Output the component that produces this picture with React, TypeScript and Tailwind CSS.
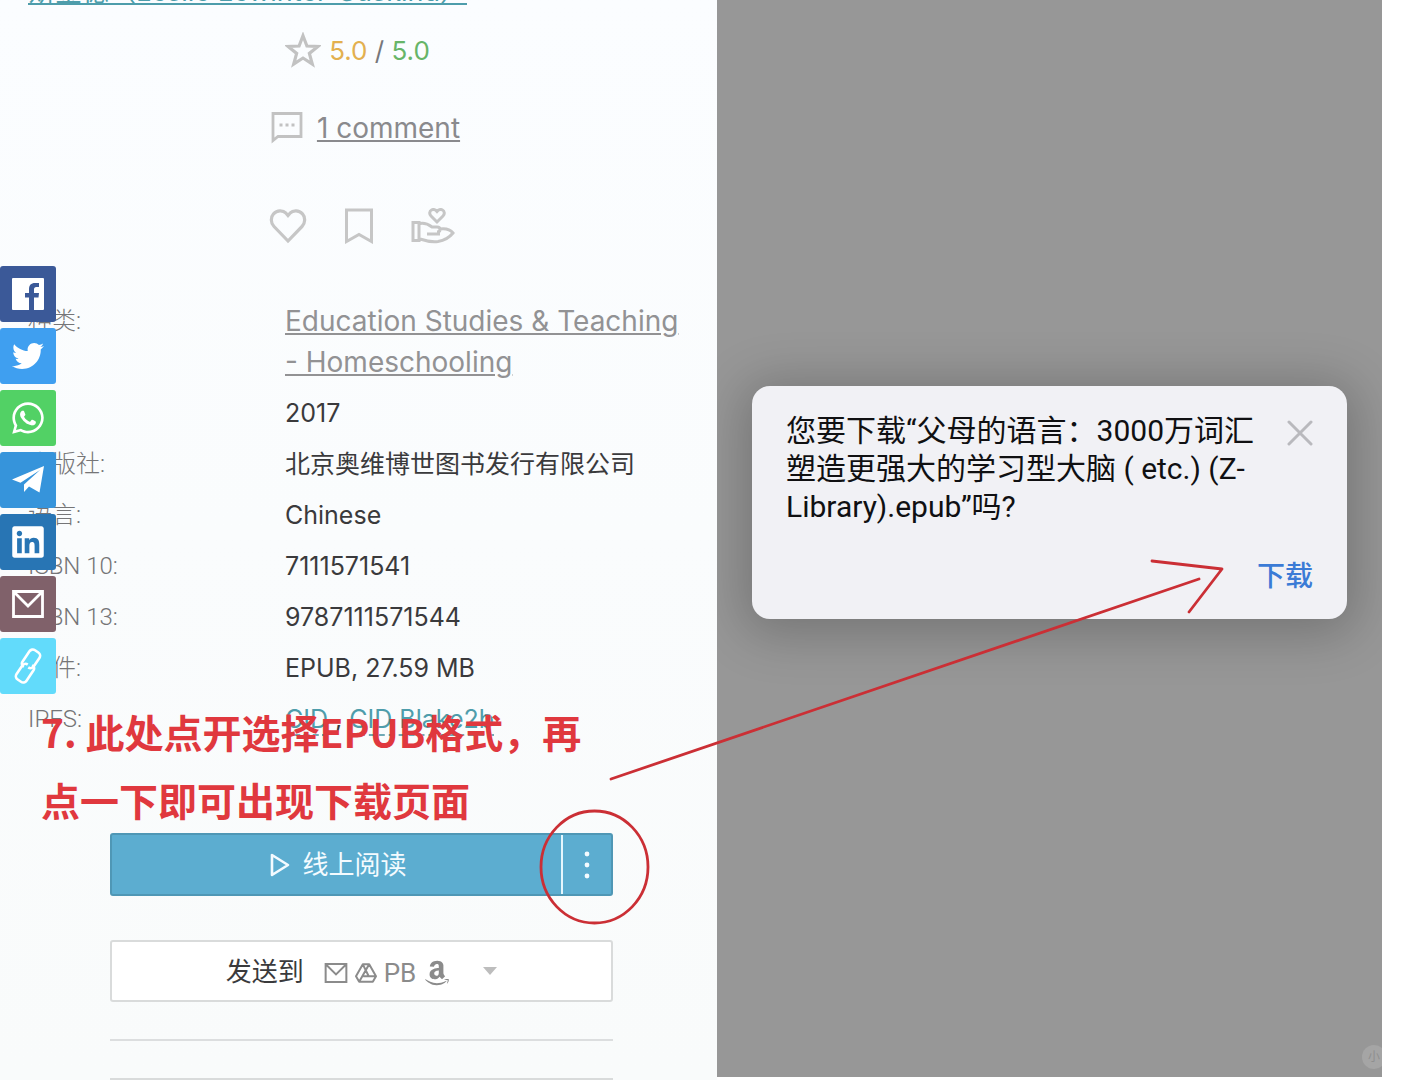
import type { ReactNode } from "react";
import { FaAmazon, FaLinkedin, FaTwitter, FaWhatsapp } from "react-icons/fa";

const FacebookIcon = () => (
  <svg viewBox="0 0 32 32" className="size-8">
    <path fill="#fff" d="M1 0h30a1 1 0 0 1 1 1v30a1 1 0 0 1-1 1h-9V19.500h4.500l.5-4.500h-5v-3.500c0-1.600.6-2.500 2.400-2.500H27V5h-4c-4 0-6 2.200-6 6v4h-4v4.500h4V32H1a1 1 0 0 1-1-1V1a1 1 0 0 1 1-1z" />
  </svg>
);

const TelegramIcon = () => (
  <svg viewBox="0 0 32 32" className="size-8">
    <path fill="#fff" d="M32 2 0 15.500l8.500 3.200L28 6 12 20.500V28l5-5.500 10.500 6z" />
  </svg>
);

const MailIcon = ({ className }: { className: string }) => (
  <svg viewBox="0 0 32 28" className={className} fill="none" stroke="currentColor" strokeWidth="2.800">
    <path d="M1.500 1.500h29v25h-29zM2 2l14 14L30 2" />
  </svg>
);

const LinkIcon = () => (
  <svg viewBox="0 0 32 36" className="h-9 w-8" fill="none" stroke="#fff" strokeWidth="2.600">
    <g transform="rotate(34 16 18)">
      <path d="M13 21h-.5a3.500 3.500 0 0 1-3.500-3.500V5a4 4 0 0 1 4-4h4a4 4 0 0 1 4 4v10a4 4 0 0 1-4 4" />
      <path d="M19 15h.5a3.500 3.500 0 0 1 3.500 3.500V31a4 4 0 0 1-4 4h-4a4 4 0 0 1-4-4V21a4 4 0 0 1 4-4" />
    </g>
  </svg>
);

const StarIcon = () => (
  <svg viewBox="1 1 34 34" className="size-9" fill="none" stroke="#c2c2c2" strokeWidth="3">
    <path d="m18 4.500 3.700 9.700 10.400.5-8.100 6.500 2.800 10.200L18 25.600l-8.800 5.800L12 21.200l-8.100-6.500 10.400-.5z" />
  </svg>
);

const CommentIcon = () => (
  <svg viewBox="0 0 32 32" className="size-8" fill="none" stroke="#c2c2c2" strokeWidth="2.800">
    <path d="M2 1.500h28v23H7l-5 4z" />
    <path strokeWidth="3" d="M8.500 13h3M14.500 13h3M20.500 13h3" />
  </svg>
);

const HeartIcon = () => (
  <svg viewBox="0 0 38 36" className="h-9 w-[38px]" fill="none" stroke="#c6c6c6" strokeWidth="3.200">
    <path d="M19 33 5 18.500C1.500 15 1.500 9 4.500 5.800 8 2 14 2 17 5.200l2 2.300 2-2.300c3-3.200 9-3.200 12.500.6 3 3.200 3 9.200-.5 12.700z" />
  </svg>
);

const BookmarkIcon = () => (
  <svg viewBox="0 0 28 36" className="h-9 w-7" fill="none" stroke="#c6c6c6" strokeWidth="3">
    <path d="M1.500 2h25v31.500L14 26.500 1.500 33.500z" />
  </svg>
);

const DonateIcon = () => (
  <svg viewBox="0 0 44 36" className="h-9 w-11" fill="none" stroke="#c6c6c6" strokeWidth="3">
    <path d="m26 14-6-6c-2-2-1.500-5 .5-6 2-1 4-.3 5.500 1.500C27.500 1.700 29.500 1 31.500 2c2 1 2.500 4 .5 6z" />
    <path d="M2 14.500h6v18H2zM9 15.500c5-1 8 .5 12 3.500h5c2 0 3 1 3 2.500s-1 2.500-3 2.500M16 26h13M28 21c6-1 11 0 14 4-4 5-9 7.500-15 8.500-6 .8-12-.5-18-2.500" />
  </svg>
);

const DriveIcon = () => (
  <svg viewBox="0 0 24 22" className="h-5 w-[22px]" fill="none" stroke="currentColor" strokeWidth="2.200">
    <path strokeLinejoin="round" d="M8.500 1.500h7L23 14.500l-3.500 6h-15L1 14.500zM8.500 1.500 15 14.500h8M15.500 1.500 12 7.500 4.500 20.500M9 14.500h6" />
  </svg>
);

const shares: { name: string; color: string; icon: ReactNode }[] = [
  { name: "Facebook", color: "bg-[#3b5998]", icon: <FacebookIcon /> },
  { name: "Twitter", color: "bg-[#3f9ff0]", icon: <FaTwitter className="size-8" /> },
  { name: "WhatsApp", color: "bg-[#52d165]", icon: <FaWhatsapp className="size-9" /> },
  { name: "Telegram", color: "bg-[#3694db]", icon: <TelegramIcon /> },
  { name: "LinkedIn", color: "bg-[#2875b4]", icon: <FaLinkedin className="size-9" /> },
  { name: "Email", color: "bg-[#80616a]", icon: <MailIcon className="h-7 w-8" /> },
  { name: "Copy link", color: "bg-[#62dbfb]", icon: <LinkIcon /> },
];

const details: { label: string; value: ReactNode }[] = [
  {
    label: "种类:",
    value: (
      <a href="#" className="block text-[28px] leading-[41px] text-[#929294] underline decoration-2 underline-offset-2">
        Education Studies &amp; Teaching
        <br />- Homeschooling
      </a>
    ),
  },
  { label: "年:", value: "2017" },
  { label: "出版社:", value: "北京奥维博世图书发行有限公司" },
  { label: "语言:", value: "Chinese" },
  { label: "ISBN 10:", value: "7111571541" },
  { label: "ISBN 13:", value: "9787111571544" },
  { label: "文件:", value: "EPUB, 27.59 MB" },
  {
    label: "IPFS:",
    value: (
      <span>
        <a href="#" className="border-b-2 border-dashed border-[#6fa9b5] text-[#4e9dab]">CID</a>
        {" , "}
        <a href="#" className="border-b-2 border-dashed border-[#6fa9b5] text-[#4e9dab]">CID Blake2b</a>
      </span>
    ),
  },
];

const ShareBar = () => (
  <nav aria-label="Share" className="absolute left-0 top-[266px] z-10 flex flex-col gap-1.5">
    {shares.map((share) => (
      <a
        key={share.name}
        href="#"
        aria-label={share.name}
        className={`flex size-14 items-center justify-center rounded-[3px] text-white ${share.color}`}
      >
        {share.icon}
      </a>
    ))}
  </nav>
);

const BookPage = () => (
  <section className="relative bg-linear-to-b from-[#fbfdff] to-[#f9fbfb] font-[Inter,'Noto_Sans_CJK_SC',sans-serif] text-[26px] text-[#3a3a3c]">
    <ShareBar />
    <div className="flex h-1.5 items-end overflow-hidden pl-7">
      <a href="#" className="shrink-0 whitespace-nowrap text-[27px] leading-7 text-[#4e9dab] underline decoration-2 underline-offset-2">
        斯金德（Leslie Lewinter-Suskind）
      </a>
    </div>

    <div className="pl-[110px] pr-[104px]">
      <div className="mt-6 flex h-10 items-center justify-center gap-2 pr-2">
        <StarIcon />
        <p className="text-[#77777a]">
          <span className="text-[#e3b04f]">5.0</span> / <span className="text-[#67b568]">5.0</span>
        </p>
      </div>
      <div className="mt-[38px] flex h-10 items-center justify-center gap-3.5 pl-2">
        <CommentIcon />
        <a href="#" className="text-[28px] text-[#8a8a8d] underline decoration-2 underline-offset-2">1 comment</a>
      </div>
      <div className="mt-[58px] flex h-10 items-center justify-center gap-[38px]">
        <button type="button" aria-label="Favorite"><HeartIcon /></button>
        <button type="button" aria-label="Save"><BookmarkIcon /></button>
        <button type="button" aria-label="Donate"><DonateIcon /></button>
      </div>
    </div>

    <dl className="mt-[55px] flex flex-col gap-2.5 pl-7 text-[25px] leading-[41px]">
      {details.map((detail) => (
        <div key={detail.label} className="flex">
          <dt className="w-[257px] shrink-0 font-[Roboto,'Noto_Sans_CJK_SC',sans-serif] text-2xl font-light leading-[41px] text-[#757577]">
            {detail.label}
          </dt>
          <dd className="whitespace-nowrap">{detail.value}</dd>
        </div>
      ))}
    </dl>

    <div className="mt-[93px] pl-[110px] pr-[104px]">
      <div className="flex h-[63px] rounded-[3px] border-2 border-[#4f97b5] bg-[#5cadd0] text-[#f4fbff]">
        <button type="button" className="flex flex-1 items-center justify-center gap-3 border-r-2 border-[#e5f6fd] pl-1">
          <svg viewBox="0 0 20 24" className="h-6 w-5" fill="none" stroke="currentColor" strokeWidth="2.600" strokeLinejoin="round">
            <path d="M2 2v20l16-10z" />
          </svg>
          线上阅读
        </button>
        <button type="button" aria-label="More formats" className="flex w-12 items-center justify-center">
          <svg viewBox="0 0 6 28" className="h-7 w-1.5" fill="currentColor">
            <circle cx="3" cy="3" r="2.400" />
            <circle cx="3" cy="14" r="2.400" />
            <circle cx="3" cy="25" r="2.400" />
          </svg>
        </button>
      </div>

      <button type="button" className="mt-11 flex h-[62px] w-full items-center justify-center rounded-[3px] border-2 border-[#d9dbdb] bg-white">
        发送到
        <span className="ml-5 flex items-center gap-[7px] pt-1 text-[#8b8b8b]">
          <MailIcon className="h-5 w-6" />
          <DriveIcon />
          <span className="font-[Roboto,sans-serif]">PB</span>
          <FaAmazon className="size-7" />
        </span>
        <svg viewBox="0 0 14 8" className="ml-8 h-2 w-3.5" fill="#bdbdbd">
          <path d="M0 0h14L7 8z" />
        </svg>
      </button>
      <hr className="mt-[37px] border-t-2 border-[#dcdedf]" />
      <div className="mt-[37px] h-0.5 bg-[#d9dbdb]" />
    </div>
  </section>
);

const DownloadPage = () => (
  <section className="relative mb-[3px] overflow-hidden bg-[#979797] px-[35px] pt-[386px] font-[Roboto,'Noto_Sans_CJK_SC',sans-serif]">
    <div role="dialog" aria-label="下载" className="rounded-[18px] bg-[#f1f1f5] px-[34px] pb-[22px] pt-[26px] shadow-[0_6px_50px_10px_rgba(0,0,0,0.22)]">
      <div className="flex items-start justify-between">
        <p className="whitespace-nowrap text-[30px] leading-[38px] text-[#101012]">
          您要下载“父母的语言：3000万词汇
          <br />
          塑造更强大的学习型大脑 ( etc.) (Z-
          <br />
          Library).epub”吗?
        </p>
        <button type="button" aria-label="Close" className="mt-2">
          <svg viewBox="0 0 26 26" className="size-[26px]" fill="none" stroke="#b9b9bd" strokeWidth="3" strokeLinecap="round">
            <path d="m2 2 22 22M24 2 2 24" />
          </svg>
        </button>
      </div>
      <div className="mt-[30px] flex justify-end">
        <button type="button" className="text-[28px] font-medium leading-[41px] text-[#3b7bd6]">下载</button>
      </div>
    </div>
    <span className="absolute -right-1 bottom-2 flex h-6 w-6 items-center justify-center rounded-full bg-[#a5a5a5] text-xs text-[#8f8f8f]">
      小
    </span>
  </section>
);

const Annotations = () => (
  <div className="pointer-events-none absolute inset-0 z-20">
    <p className="absolute left-[41px] top-[697px] whitespace-nowrap font-['Noto_Sans_CJK_SC',sans-serif] text-[39px] font-bold leading-[68px] text-[#e0383e]">
      7. 此处点开选择EPUB格式，再
      <br />
      点一下即可出现下载页面
    </p>
    <svg className="absolute inset-0 h-full w-full" fill="none" stroke="#cb2f35" strokeWidth="2.800" strokeLinecap="round" strokeLinejoin="round">
      <ellipse cx="594.500" cy="867" rx="53.500" ry="56" />
      <path d="M611 779 1199 579M1152 561l70 8-33 43" />
    </svg>
  </div>
);

const App = () => {
  return (
    <main className="relative grid min-h-screen grid-cols-[717fr_665fr_40fr] overflow-hidden bg-white">
      <BookPage />
      <DownloadPage />
      <Annotations />
    </main>
  );
};

export default App;
